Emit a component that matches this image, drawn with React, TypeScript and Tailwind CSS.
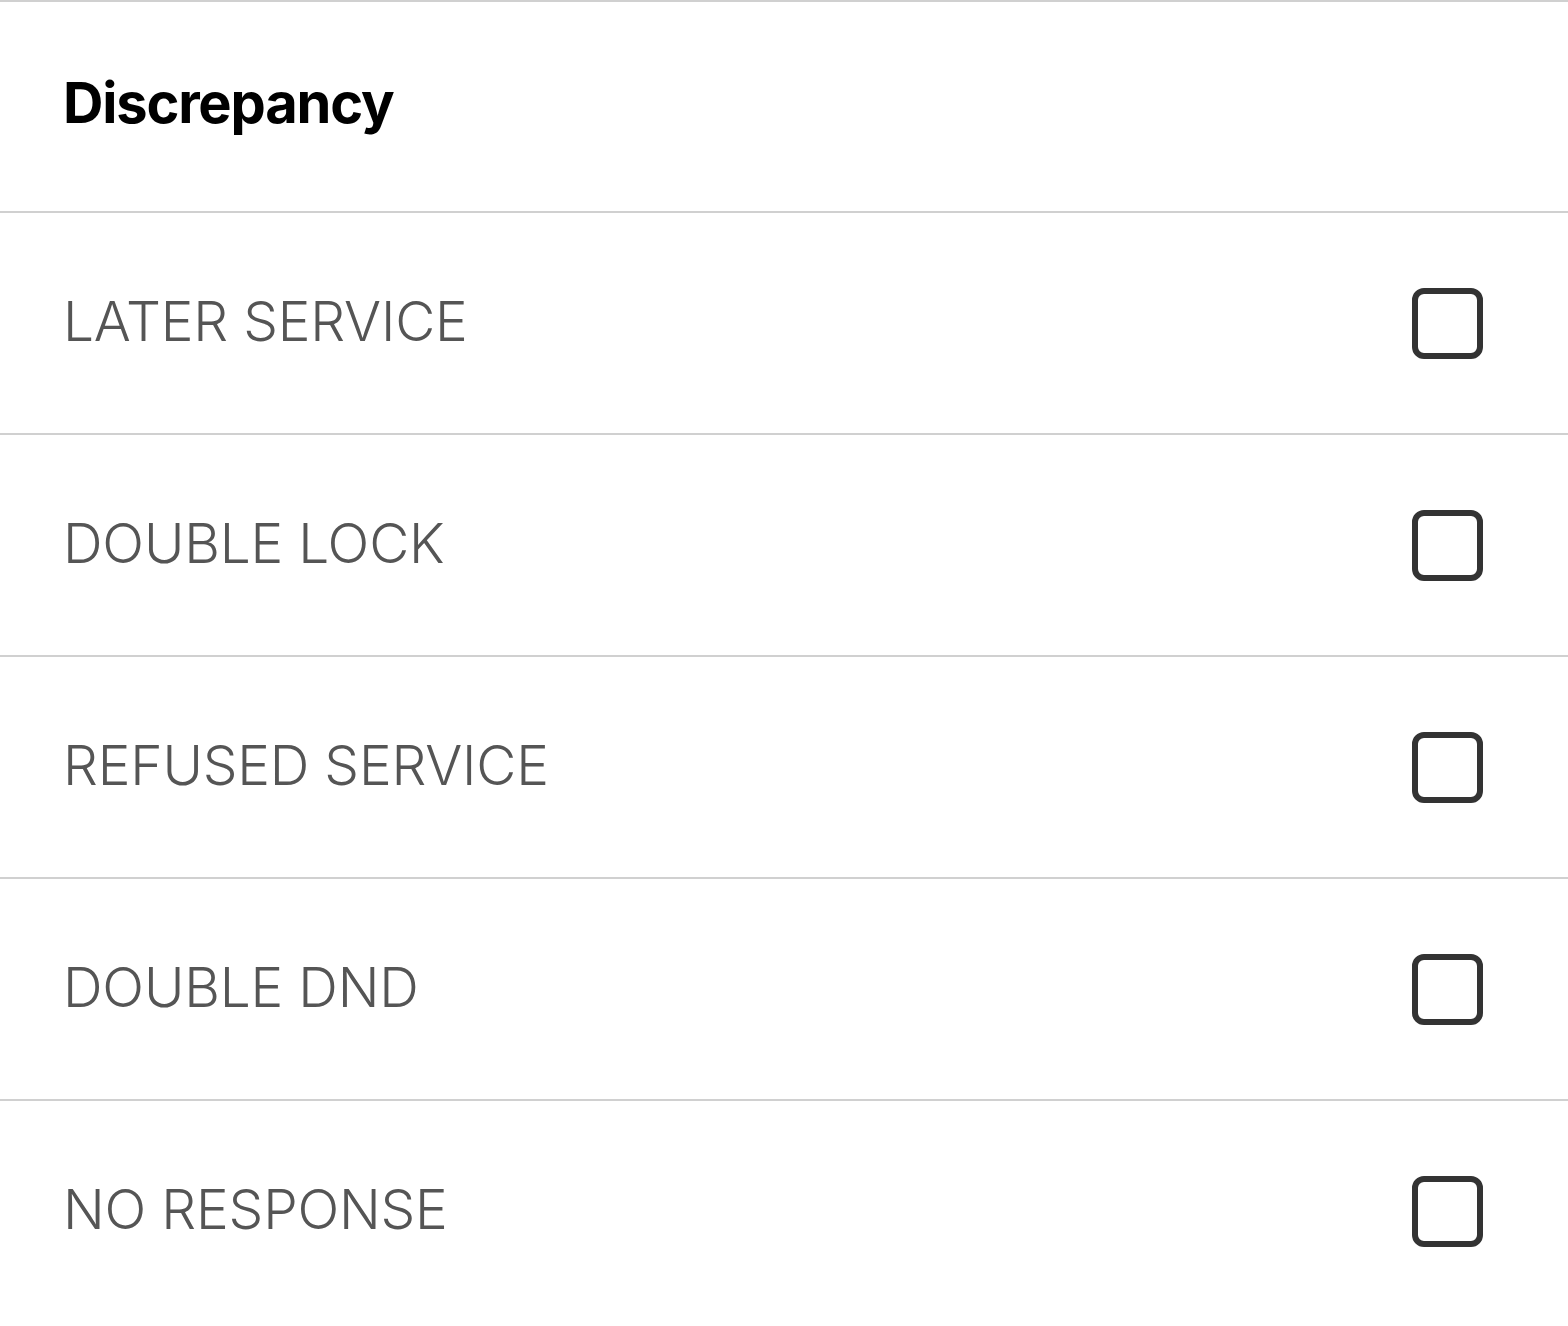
const options = ["LATER SERVICE", "DOUBLE LOCK", "REFUSED SERVICE", "DOUBLE DND", "NO RESPONSE"];

const Checkbox = () => (
  <div className="w-[71px] h-[71px] rounded-[12px] border-[6px] border-[#333333] bg-white" />
);

export default function App() {
  return (
    <div className="w-full min-h-[1326px] bg-white font-['Inter',sans-serif] border-t-2 border-[#d0d0d0]">
      <div className="h-[209px] flex items-center pl-[63px] pb-[8px]">
        <h1 className="text-[56px] font-bold text-black tracking-[-1.2px] leading-none">Discrepancy</h1>
      </div>
      {options.map((label) => (
        <div key={label} className="h-[222px] border-t-2 border-[#d0d0d0] flex items-center justify-between pl-[63px] pr-[85px]">
          <span className="text-[55px] font-light text-[#555555] tracking-[-0.2px] leading-none pb-[3px]">{label}</span>
          <Checkbox />
        </div>
      ))}
    </div>
  );
}
